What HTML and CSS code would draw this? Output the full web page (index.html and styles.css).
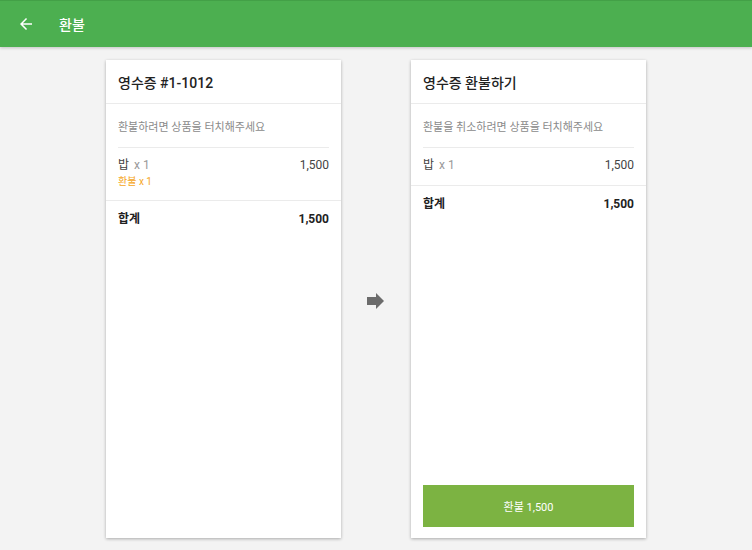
FILE: index.html
```html
<!DOCTYPE html>
<html lang="ko">
<head>
    <meta charset="UTF-8">
    <meta name="viewport" content="width=device-width, initial-scale=1.0">
    <title>환불</title>
    <link rel="stylesheet" href="styles.css">
</head>
<body>
    <header class="app-bar">
        <svg class="back-icon" viewBox="0 0 24 24" width="18" height="18">
            <path d="M20 11H7.83l5.59-5.59L12 4l-8 8 8 8 1.41-1.41L7.83 13H20v-2z" fill="#fff"/>
        </svg>
        <div class="app-title">환불</div>
    </header>

    <main class="refund">
        <section class="card">
            <h2 class="card-title">영수증 #1-1012</h2>
            <div class="hint">환불하려면 상품을 터치해주세요</div>
            <div class="item">
                <div class="item-row">
                    <span class="item-name">밥 <span class="qty">x 1</span></span>
                    <span class="item-price">1,500</span>
                </div>
                <div class="refund-tag">환불 x 1</div>
            </div>
            <div class="total">
                <span>합계</span>
                <span>1,500</span>
            </div>
        </section>

        <div class="move">
            <svg viewBox="0 0 18 16" width="18" height="16">
                <polygon points="0,4 9,4 9,0 17,8 9,16 9,12 0,12" fill="#6b6b6b"/>
            </svg>
        </div>

        <section class="card">
            <h2 class="card-title">영수증 환불하기</h2>
            <div class="hint">환불을 취소하려면 상품을 터치해주세요</div>
            <div class="item">
                <div class="item-row">
                    <span class="item-name">밥 <span class="qty">x 1</span></span>
                    <span class="item-price">1,500</span>
                </div>
            </div>
            <div class="total">
                <span>합계</span>
                <span>1,500</span>
            </div>
            <div class="spacer"></div>
            <button class="refund-btn">환불 1,500</button>
        </section>
    </main>
</body>
</html>
```

FILE: styles.css
```css
* {
    margin: 0;
    padding: 0;
    box-sizing: border-box;
}

body {
    height: 550px;
    overflow: hidden;
    background: #f3f3f3;
    font-family: Roboto, 'Noto Sans CJK KR', sans-serif;
    color: #333;
    display: flex;
    flex-direction: column;
}

.app-bar {
    height: 47px;
    flex-shrink: 0;
    background: #4caf50;
    border-top: 1px solid #43a047;
    display: flex;
    align-items: center;
    padding-left: 17px;
    box-shadow: 0 1px 3px rgba(0, 0, 0, 0.2);
}

.back-icon {
    display: block;
}

.app-title {
    margin-left: 24px;
    color: #fff;
    font-size: 14px;
    font-weight: 500;
}

.refund {
    flex: 1;
    display: flex;
    justify-content: center;
    align-items: stretch;
    padding: 13px 0 12px;
}

.card {
    width: 235px;
    background: #fff;
    box-shadow: 0 1px 3px rgba(0, 0, 0, 0.3);
    display: flex;
    flex-direction: column;
}

.card-title {
    height: 44px;
    flex-shrink: 0;
    display: flex;
    align-items: center;
    padding: 0 12px;
    font-size: 14px;
    font-weight: 500;
    color: #222;
    border-bottom: 1px solid #ebebeb;
}

.hint {
    height: 44px;
    flex-shrink: 0;
    margin: 0 12px;
    display: flex;
    align-items: center;
    font-size: 11px;
    color: #8a8a8a;
    border-bottom: 1px solid #ebebeb;
}

.item {
    padding: 9px 12px 12px;
    border-bottom: 1px solid #ebebeb;
}

.item-row {
    display: flex;
    justify-content: space-between;
    font-size: 12px;
    line-height: 16px;
    color: #444;
}

.qty {
    margin-left: 2px;
    color: #999;
}

.refund-tag {
    margin-top: 3px;
    font-size: 10px;
    line-height: 12px;
    color: #f5a623;
}

.total {
    display: flex;
    justify-content: space-between;
    padding: 10px 12px 12px;
    font-size: 12px;
    line-height: 16px;
    font-weight: 700;
    color: #222;
}

.spacer {
    flex: 1;
}

.refund-btn {
    margin: 0 12px 11px;
    height: 42px;
    border: none;
    background: #7cb342;
    color: #fff;
    font-family: Roboto, 'Noto Sans CJK KR', sans-serif;
    font-size: 11px;
}

.move {
    width: 70px;
    display: flex;
    align-items: center;
    justify-content: center;
    padding-top: 4px;
}

.move svg {
    display: block;
}
```
